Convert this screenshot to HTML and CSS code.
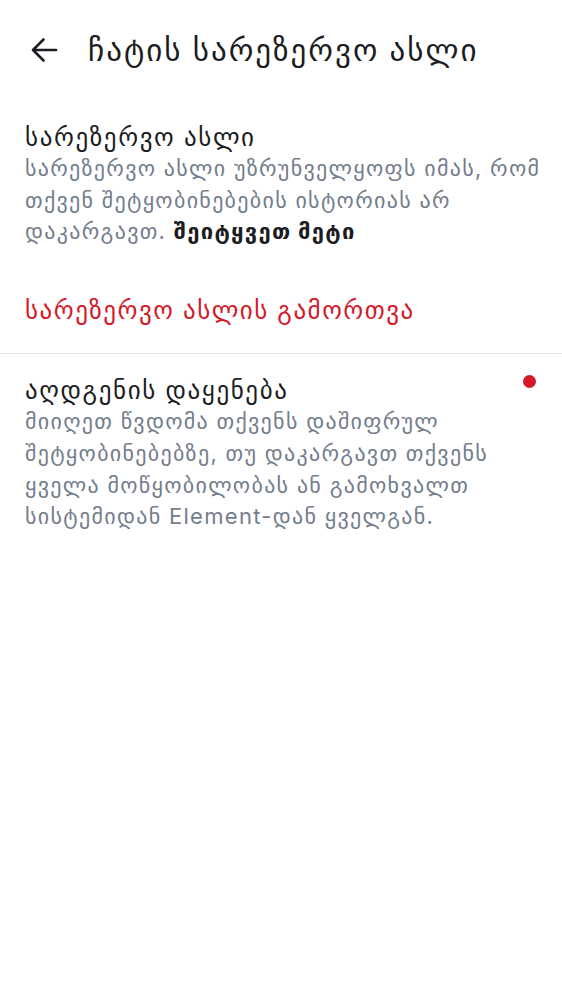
FILE: index.html
```html
<!DOCTYPE html>
<html lang="ka">
<head>
<meta charset="utf-8">
<link rel="stylesheet" href="styles.css">
</head>
<body>
<header class="topbar">
  <svg class="back" width="28" height="28" viewBox="0 0 28 28" aria-hidden="true">
    <path d="M26 14H3M13.5 3.5L3 14l10.5 10.5" fill="none" stroke="#1b1d22" stroke-width="2.6" stroke-linecap="round" stroke-linejoin="round"/>
  </svg>
  <h1 class="title">ჩატის სარეზერვო ასლი</h1>
</header>
<section class="block">
  <h2 class="item-title">სარეზერვო ასლი</h2>
  <p class="item-desc">სარეზერვო ასლი უზრუნველყოფს იმას, რომ თქვენ შეტყობინებების ისტორიას არ დაკარგავთ. <b class="more">შეიტყვეთ მეტი</b></p>
</section>
<div class="danger">სარეზერვო ასლის გამორთვა</div>
<hr class="divider">
<section class="block recovery">
  <div class="text">
    <h2 class="item-title">აღდგენის დაყენება</h2>
    <p class="item-desc">მიიღეთ წვდომა თქვენს დაშიფრულ შეტყობინებებზე, თუ დაკარგავთ თქვენს ყველა მოწყობილობას ან გამოხვალთ სისტემიდან Element-დან ყველგან.</p>
  </div>
  <span class="dot"></span>
</section>
</body>
</html>
```
FILE: styles.css
```css
html, body {
  margin: 0;
  padding: 0;
  background: #ffffff;
}
body {
  font-family: Inter, "DejaVu Sans", sans-serif;
  color: #1b1d22;
}
.topbar {
  display: flex;
  align-items: center;
  height: 100px;
  padding-left: 30px;
  box-sizing: border-box;
}
.back {
  flex: none;
  width: 28px;
  height: 28px;
}
.title {
  margin: 0 0 0 30px;
  font-size: 31px;
  font-weight: 500;
  letter-spacing: 2px;
  line-height: 40px;
  white-space: nowrap;
}
.block {
  padding: 21px 20px 0 25px;
}
.item-title {
  margin: 0;
  font-size: 25px;
  font-weight: 400;
  letter-spacing: 1.6px;
  line-height: 32px;
}
.item-desc {
  margin: 0;
  font-size: 22px;
  letter-spacing: 1.3px;
  line-height: 31.7px;
  color: #737d8c;
}
.more {
  color: #1b1d22;
  font-weight: 700;
}
.danger {
  padding: 46px 20px 27px 25px;
  font-size: 25px;
  letter-spacing: 1.5px;
  line-height: 32px;
  color: #d51928;
}
.divider {
  margin: 0;
  border: 0;
  border-top: 1px solid #e3e5e8;
}
.recovery {
  display: flex;
  align-items: flex-start;
  justify-content: space-between;
  padding-top: 20px;
}
.dot {
  flex: none;
  width: 13px;
  height: 13px;
  border-radius: 50%;
  background: #d51928;
  margin-top: 1px;
  margin-right: 6px;
}
```
